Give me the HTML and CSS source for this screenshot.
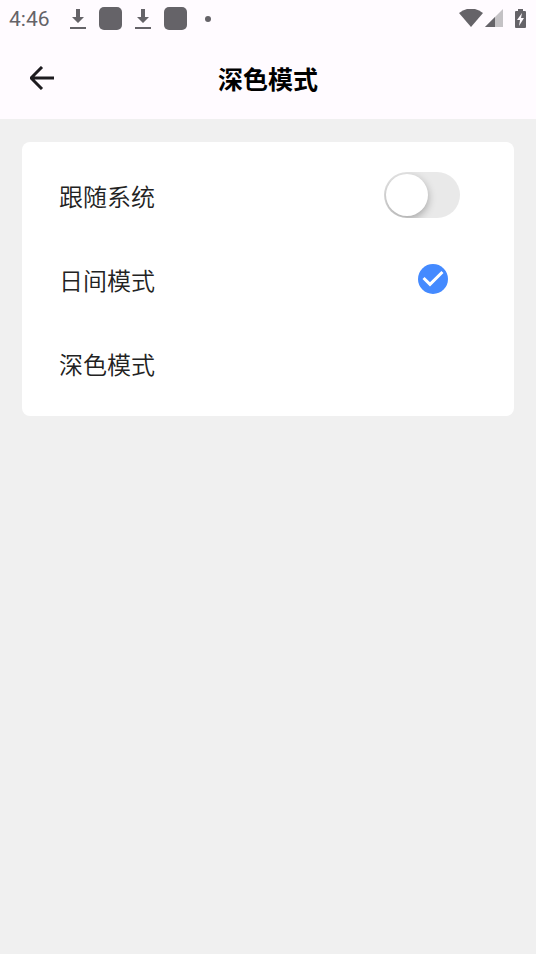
FILE: index.html
```html
<!DOCTYPE html>
<html lang="zh-CN">
    <head>
        <meta charset="UTF-8">
        <meta name="viewport" content="width=device-width, initial-scale=1.0">
        <title>深色模式</title>
        <link rel="stylesheet" href="styles.css">
    </head>
    <body>
        <div class="top">
            <div class="status-bar">
                <span class="time">4:46</span>
                <div class="notifications">
                    <svg width="16" height="20" viewBox="0 0 16 20"><path d="M6 0h4v8h4l-6 6-6-6h4zM0 18h16v2H0z"/></svg>
                    <span class="app-icon"></span>
                    <svg width="16" height="20" viewBox="0 0 16 20"><path d="M6 0h4v8h4l-6 6-6-6h4zM0 18h16v2H0z"/></svg>
                    <span class="app-icon"></span>
                    <span class="dot"></span>
                </div>
                <div class="system-icons">
                    <svg width="24" height="20" viewBox="0 0 24 20"><path d="M0 4Q12-5 24 4L12 18z"/></svg>
                    <svg width="18" height="20" viewBox="0 0 18 20"><path class="faint" d="M18 0v18H0z"/><path d="M10 8v10H0z"/></svg>
                    <svg class="battery" width="11" height="20" viewBox="0 0 11 20"><path fill-rule="evenodd" d="M3 0h5v2h2q1 0 1 1v15q0 1-1 1H1q-1 0-1-1V3q0-1 1-1h2zM7 4l-5 7h3l-1 6 5-8H6z"/></svg>
                </div>
            </div>
            <header class="header">
                <button type="button" class="back" aria-label="返回">
                    <svg width="24" height="24" viewBox="0 0 24 24"><path d="M24 12H2M12 1L1 12l11 11"/></svg>
                </button>
                <h1>深色模式</h1>
            </header>
        </div>

        <main class="card">
            <div class="row">
                <label for="system">跟随系统</label>
                <input type="checkbox" class="switch" id="system">
            </div>
            <div class="row">
                <label for="light">日间模式</label>
                <input type="radio" class="choice" name="mode" id="light" value="light" checked>
            </div>
            <div class="row">
                <label for="dark">深色模式</label>
                <input type="radio" class="choice" name="mode" id="dark" value="dark">
            </div>
        </main>
    </body>
</html>
```
FILE: styles.css
```css
* {
    margin: 0;
    padding: 0;
    box-sizing: border-box;
}

body {
    background-color: #f0f0f0;
    font-family: Roboto, "Noto Sans CJK SC", sans-serif;
    color: #222;
}

.top {
    background-color: #fffbff;
}

.status-bar {
    display: flex;
    align-items: center;
    height: 37px;
    padding: 0 10px 0 9px;
    color: #656368;
    fill: #656368;
}

.time {
    font-size: 21px;
}

.notifications {
    display: flex;
    align-items: center;
    gap: 13px;
    margin-left: 20px;
}

.app-icon {
    width: 23px;
    height: 23px;
    border-radius: 5px;
    background-color: #656368;
}

.dot {
    width: 6px;
    height: 6px;
    margin-left: 5px;
    border-radius: 50%;
    background-color: #656368;
}

.system-icons {
    display: flex;
    align-items: center;
    gap: 2px;
    margin-left: auto;
}

.faint {
    fill: #c4c2c5;
}

.battery {
    margin-left: 10px;
}

.header {
    display: grid;
    grid-template-columns: 84px 1fr 84px;
    align-items: center;
    height: 82px;
}

.back {
    display: flex;
    justify-content: center;
    padding: 12px 0;
    background: none;
    border: none;
    cursor: pointer;

    path {
        fill: none;
        stroke: #1d1b1f;
        stroke-width: 3;
    }
}

h1 {
    text-align: center;
    font-size: 25px;
    font-weight: 700;
    color: #000;
}

.card {
    margin: 23px 22px;
    padding: 11px 54px 11px 37px;
    background-color: white;
    border-radius: 8px;
}

.row {
    display: flex;
    align-items: center;
    justify-content: space-between;
    height: 84px;

    label {
        font-size: 24px;
        font-weight: 350;
        cursor: pointer;
    }
}

.switch {
    appearance: none;
    width: 76px;
    height: 46px;
    padding: 2px;
    border-radius: 23px;
    background-color: #e9e9e9;
    overflow: hidden;
    cursor: pointer;
}

.switch::before {
    content: "";
    display: block;
    width: 42px;
    height: 42px;
    border-radius: 50%;
    background-color: white;
    box-shadow: 0 3px 8px rgba(0, 0, 0, 0.3);
}

.switch:checked {
    background-color: #448aff;
}

.switch:checked::before {
    margin-left: auto;
}

.choice {
    appearance: none;
    width: 30px;
    height: 30px;
    margin-right: 12px;
    border-radius: 50%;
    cursor: pointer;
}

.choice:checked {
    background-color: #448aff;
}

.choice:checked::before {
    content: "";
    display: block;
    height: 100%;
    background-color: white;
    clip-path: polygon(40% 75%, 15% 50%, 22% 43%, 40% 61%, 78% 23%, 85% 30%);
}
```
